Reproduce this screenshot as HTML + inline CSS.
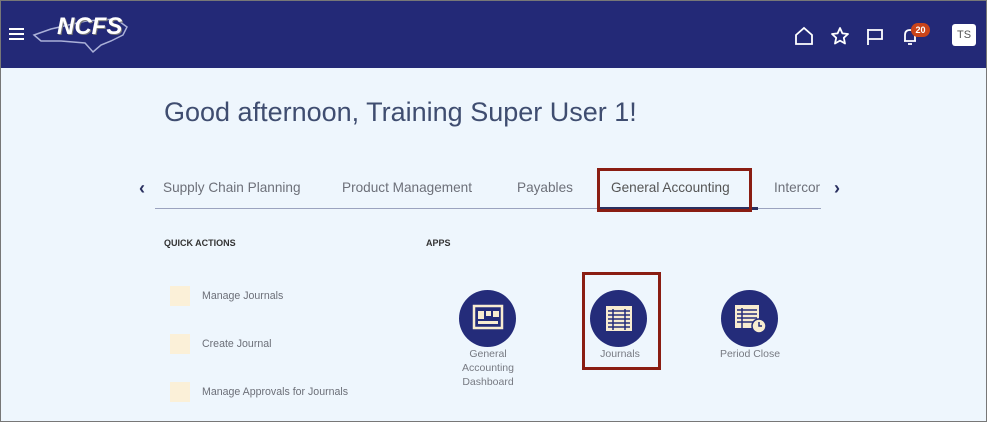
<!DOCTYPE html>
<html><head><style>
body{margin:0;width:987px;height:422px;overflow:hidden;background:#eef6fd;font-family:"Liberation Sans",sans-serif;position:relative;}
.frame{position:absolute;left:0;top:0;width:985px;height:420px;border:1px solid #777;}
.hdr{position:absolute;left:1px;top:1px;width:985px;height:67px;background:#232977;}
.t{position:absolute;white-space:nowrap;}
.tab{position:absolute;top:180px;font-size:13.6px;color:#6d7079;}
.qa{position:absolute;left:170px;width:20px;height:20px;background:#fbf0d8;}
.qt{position:absolute;left:202px;font-size:10.6px;color:#6c6f78;}
.circ{position:absolute;width:57px;height:57px;border-radius:50%;background:#242c7a;}
.al{position:absolute;font-size:10.5px;color:#777a82;text-align:center;line-height:14px;}
.red{position:absolute;border:3px solid #8a1d12;box-sizing:border-box;}
</style></head><body>
<div class="hdr">
 <div style="position:absolute;left:8px;top:27px;width:15px;height:2px;background:#fff;box-shadow:0 5px 0 #fff,0 10px 0 #fff"></div>
 <svg style="position:absolute;left:30px;top:14px" width="100" height="40"><path d="M3 20 L20 14 L55 6 L85 4 L96 12 L92 20 L80 26 L70 30 L62 37 L54 28 L30 26 L10 26 Z" fill="none" stroke="#aab0d8" stroke-width="1.5"/></svg>
 <div class="t" style="left:56px;top:12px;font-size:24px;font-weight:bold;font-style:italic;color:#fff;text-shadow:1px 1px 0 #777">NCFS</div>
 <svg style="position:absolute;left:793px;top:25px" width="20" height="20"><path d="M2 9 L10 2 L18 9 L18 18 L2 18 Z" fill="none" stroke="#fff" stroke-width="1.8"/></svg>
 <svg style="position:absolute;left:829px;top:25px" width="20" height="20"><path d="M10 2 L12.4 7.4 L18 8 L13.8 11.8 L15 17.5 L10 14.6 L5 17.5 L6.2 11.8 L2 8 L7.6 7.4 Z" fill="none" stroke="#fff" stroke-width="1.8" stroke-linejoin="round"/></svg>
 <svg style="position:absolute;left:865px;top:26px" width="18" height="20"><path d="M2 2 L2 18 M2 3 L16 3 L16 12 L2 12" fill="none" stroke="#fff" stroke-width="1.8"/></svg>
 <svg style="position:absolute;left:900px;top:26px" width="18" height="20"><path d="M3 14 L15 14 M4 14 L4 8 Q4 3 9 3 Q14 3 14 8 L14 14 M7 17 L11 17" fill="none" stroke="#fff" stroke-width="1.8"/></svg>
 <div class="t" style="left:910px;top:22px;width:19px;height:14px;border-radius:7px;background:#c9441a;color:#fff;font-size:9px;font-weight:bold;text-align:center;line-height:14px">20</div>
 <div class="t" style="left:951px;top:23px;width:24px;height:22px;background:#fff;border-radius:3px;color:#555;font-size:11px;text-align:center;line-height:22px">TS</div>
</div>
<div class="t" style="left:164px;top:97px;font-size:27px;color:#3f4d70">Good afternoon, Training Super User 1!</div>
<div class="t" style="left:139px;top:178px;font-size:18px;color:#2a3060;font-weight:bold">‹</div>
<div class="t" style="left:834px;top:178px;font-size:18px;color:#2a3060;font-weight:bold">›</div>
<div class="tab" style="left:163px">Supply Chain Planning</div>
<div class="tab" style="left:342px">Product Management</div>
<div class="tab" style="left:517px">Payables</div>
<div class="tab" style="left:611px;color:#555">General Accounting</div>
<div class="tab" style="left:774px;width:46px;overflow:hidden">Intercompany</div>
<div style="position:absolute;left:155px;top:208px;width:666px;height:1px;background:#9ba3bf"></div>
<div style="position:absolute;left:600px;top:207px;width:158px;height:3px;background:#2a3060"></div>
<div class="red" style="left:597px;top:168px;width:155px;height:44px"></div>
<div class="t" style="left:164px;top:238px;font-size:9px;font-weight:bold;color:#333">QUICK ACTIONS</div>
<div class="t" style="left:426px;top:238px;font-size:9px;font-weight:bold;color:#333">APPS</div>
<div class="qa" style="top:286px"></div><div class="qt" style="top:290px">Manage Journals</div>
<div class="qa" style="top:334px"></div><div class="qt" style="top:338px">Create Journal</div>
<div class="qa" style="top:382px"></div><div class="qt" style="top:386px">Manage Approvals for Journals</div>
<div class="circ" style="left:459px;top:290px"><svg width="57" height="57"><rect x="15" y="16" width="28" height="22" fill="none" stroke="#f8ecd0" stroke-width="2.5"/><rect x="19" y="21" width="6" height="8" fill="#f8ecd0"/><rect x="27" y="21" width="5" height="5" fill="#f8ecd0"/><rect x="34" y="21" width="6" height="6" fill="#f8ecd0"/><rect x="19" y="31" width="20" height="3" fill="#f8ecd0"/></svg></div>
<div class="al" style="left:448px;top:347px;width:80px">General<br>Accounting<br>Dashboard</div>
<div class="circ" style="left:590px;top:290px"><svg width="57" height="57"><rect x="16" y="16" width="26" height="25" fill="#f8ecd0"/><g stroke="#242c7a" stroke-width="1.5"><path d="M18 21H40M18 25H40M18 29H40M18 33H40M18 37H40M23 19V40M35 19V40"/></g></svg></div>
<div class="red" style="left:582px;top:272px;width:79px;height:98px"></div>
<div class="al" style="left:580px;top:347px;width:80px">Journals</div>
<div class="circ" style="left:721px;top:290px"><svg width="57" height="57"><rect x="14" y="15" width="24" height="23" fill="#f8ecd0"/><g stroke="#242c7a" stroke-width="1.5"><path d="M16 20H36M16 24H36M16 28H36M16 32H36M21 18V38"/></g><circle cx="38" cy="36" r="7" fill="#f8ecd0" stroke="#242c7a" stroke-width="1.5"/><path d="M38 32V36H41" stroke="#242c7a" stroke-width="1.5" fill="none"/></svg></div>
<div class="al" style="left:710px;top:347px;width:80px">Period Close</div>
<div class="frame"></div>
</body></html>
